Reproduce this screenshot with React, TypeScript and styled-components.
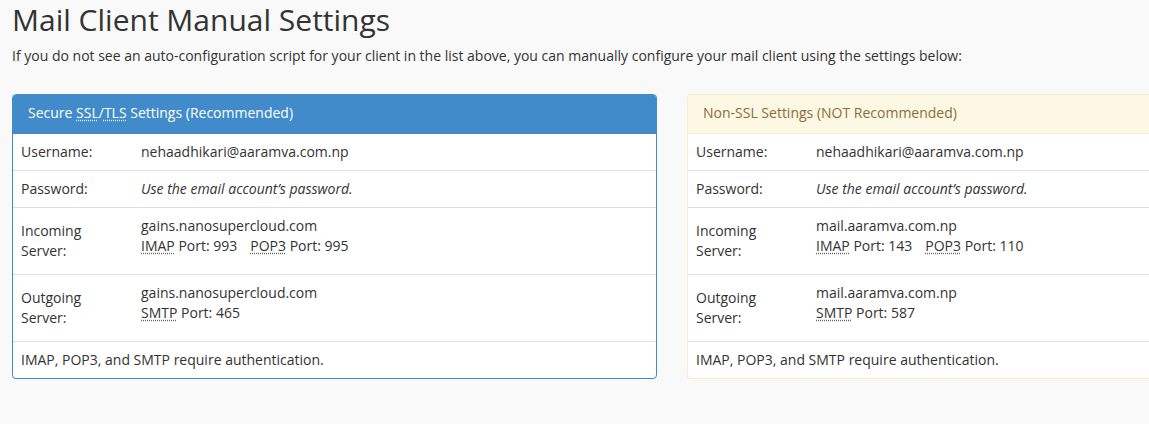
import React from "react";
import styled, { createGlobalStyle, css } from "styled-components";

const Global = createGlobalStyle`
  html, body { margin: 0; padding: 0; }
  body {
    background: #f9f9f9;
    font-family: "Open Sans", "Liberation Sans", sans-serif;
    font-size: 14px;
    line-height: 20px;
    color: #333;
    overflow: hidden;
  }
`;

const Page = styled.div`
  padding: 0 12px;
`;

const Title = styled.h1`
  margin: 3px 0 10px;
  font-size: 30px;
  line-height: 33px;
  font-weight: 400;
  color: #333;
`;

const Intro = styled.p`
  margin: 0 0 28px;
`;

const Columns = styled.div`
  display: grid;
  grid-template-columns: 645px 645px;
  column-gap: 30px;
  width: 1320px;
`;

type Variant = "primary" | "warning";

const Panel = styled.div<{ $variant: Variant }>`
  background: #fff;
  border-radius: 4px;
  border: 1px solid ${(p) => (p.$variant === "primary" ? "#428bca" : "#faebcc")};
  box-shadow: 0 1px 1px rgba(0, 0, 0, 0.05);
  overflow: hidden;
`;

const Heading = styled.div<{ $variant: Variant }>`
  padding: 9px 15px 11px;
  line-height: 18px;
  font-size: 14px;
  ${(p) =>
    p.$variant === "primary"
      ? css`
          background: #428bca;
          color: #fff;
          border-bottom: 1px solid #428bca;
        `
      : css`
          background: #fcf8e3;
          color: #8a6d3b;
          border-bottom: 1px solid #faebcc;
        `}
`;

const Table = styled.table`
  width: 100%;
  border-collapse: collapse;
  border-spacing: 0;
`;

const Row = styled.tr`
  & + & > td {
    border-top: 1px solid #ddd;
  }
`;

const Label = styled.td`
  width: 104px;
  padding: 8px;
  vertical-align: middle;
`;

const Value = styled.td<{ $italic?: boolean; $tall?: boolean }>`
  padding: ${(p) => (p.$tall ? "8px 8px 18px" : "8px")};
  vertical-align: top;
  font-style: ${(p) => (p.$italic ? "italic" : "normal")};
`;

const Note = styled.td`
  padding: 8px;
`;

const Abbr = styled.abbr<{ $light?: boolean }>`
  text-decoration: underline dotted ${(p) => (p.$light ? "#e3edf7" : "#666")};
  text-underline-offset: 2px;
  cursor: help;
`;

const Port = styled.span`
  & + & {
    margin-left: 13px;
  }
`;

type Settings = {
  variant: Variant;
  user: string;
  incoming: string;
  imap: number;
  pop3: number;
  outgoing: string;
  smtp: number;
};

const data: Settings[] = [
  {
    variant: "primary",
    user: "nehaadhikari@aaramva.com.np",
    incoming: "gains.nanosupercloud.com",
    imap: 993,
    pop3: 995,
    outgoing: "gains.nanosupercloud.com",
    smtp: 465,
  },
  {
    variant: "warning",
    user: "nehaadhikari@aaramva.com.np",
    incoming: "mail.aaramva.com.np",
    imap: 143,
    pop3: 110,
    outgoing: "mail.aaramva.com.np",
    smtp: 587,
  },
];

function SettingsPanel({ s }: { s: Settings }) {
  return (
    <Panel $variant={s.variant}>
      <Heading $variant={s.variant}>
        {s.variant === "primary" ? (
          <>
            Secure <Abbr $light title="Secure Sockets Layer">SSL</Abbr>/
            <Abbr $light title="Transport Layer Security">TLS</Abbr> Settings (Recommended)
          </>
        ) : (
          <>Non-SSL Settings (NOT Recommended)</>
        )}
      </Heading>
      <Table>
        <tbody>
          <Row>
            <Label>Username:</Label>
            <Value>{s.user}</Value>
          </Row>
          <Row>
            <Label>Password:</Label>
            <Value $italic>Use the email account’s password.</Value>
          </Row>
          <Row>
            <Label>
              Incoming
              <br />
              Server:
            </Label>
            <Value $tall>
              {s.incoming}
              <br />
              <Port>
                <Abbr title="Internet Message Access Protocol">IMAP</Abbr> Port: {s.imap}
              </Port>
              <Port>
                <Abbr title="Post Office Protocol 3">POP3</Abbr> Port: {s.pop3}
              </Port>
            </Value>
          </Row>
          <Row>
            <Label>
              Outgoing
              <br />
              Server:
            </Label>
            <Value $tall>
              {s.outgoing}
              <br />
              <Port>
                <Abbr title="Simple Mail Transfer Protocol">SMTP</Abbr> Port: {s.smtp}
              </Port>
            </Value>
          </Row>
          <Row>
            <Note colSpan={2}>IMAP, POP3, and SMTP require authentication.</Note>
          </Row>
        </tbody>
      </Table>
    </Panel>
  );
}

export default function App() {
  return (
    <Page>
      <Global />
      <Title>Mail Client Manual Settings</Title>
      <Intro>
        If you do not see an auto-configuration script for your client in the list above, you can
        manually configure your mail client using the settings below:
      </Intro>
      <Columns>
        {data.map((s) => (
          <SettingsPanel key={s.variant} s={s} />
        ))}
      </Columns>
    </Page>
  );
}
